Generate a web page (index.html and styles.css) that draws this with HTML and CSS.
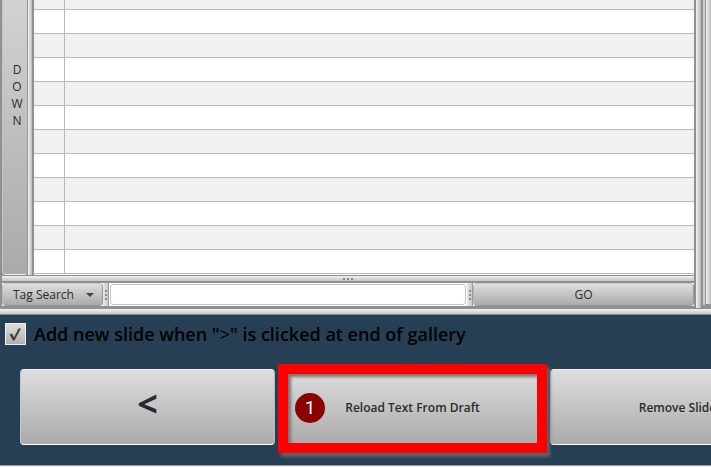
FILE: index.html
```
<!DOCTYPE html>
<html lang="en">
<head>
<meta charset="utf-8">
<title>Slide editor</title>
<link rel="stylesheet" href="styles.css">
</head>
<body>
<main class="workspace">
  <section class="editor">
    <div class="gallery">
      <button class="btn down" type="button"><span>D</span><span>O</span><span>W</span><span>N</span></button>
      <div class="bar-v"></div>
      <div class="sheet">
        <table aria-label="Slides">
          <tbody>
            <tr class="first"><td class="num"></td><td></td></tr>
            <tr><td></td><td></td></tr>
            <tr><td></td><td></td></tr>
            <tr><td></td><td></td></tr>
            <tr><td></td><td></td></tr>
            <tr><td></td><td></td></tr>
            <tr><td></td><td></td></tr>
            <tr><td></td><td></td></tr>
            <tr><td></td><td></td></tr>
            <tr><td></td><td></td></tr>
            <tr><td></td><td></td></tr>
            <tr><td></td><td></td></tr>
          </tbody>
        </table>
      </div>
    </div>
    <div class="bar-h"><i></i><i></i><i></i></div>
    <form class="search">
      <button class="btn tag" type="button">Tag Search
        <svg width="8" height="4" viewBox="0 0 8 4" aria-hidden="true"><path d="M0 0h8L4 4z" fill="#444"/></svg>
      </button>
      <div class="grip"><i></i><i></i><i></i></div>
      <input class="query" type="text" aria-label="Tag">
      <div class="grip"><i></i><i></i><i></i></div>
      <button class="btn go" type="button">GO</button>
    </form>
  </section>
  <div class="divider"></div>
  <aside class="next-pane"><div></div></aside>
</main>
<div class="shelf"></div>
<footer class="controls">
  <label class="option"><input type="checkbox" checked><svg class="tick" width="20" height="20" viewBox="0 0 20 20" aria-hidden="true"><path d="M4.5 10.5L7 9.5L9 13.2L13.5 4.5L16 4.5L9.5 16.5H7.8z" fill="#444"/></svg><span>Add new slide when "<span class="sign">&gt;</span>" is clicked at end of gallery</span></label>
  <div class="actions">
    <button class="btn action prev" type="button">&lt;</button>
    <div class="marked">
      <button class="btn action" type="button">Reload Text From Draft</button>
      <div class="frame"><span class="step">1</span></div>
    </div>
    <button class="btn action" type="button">Remove Slide</button>
  </div>
</footer>
</body>
</html>
```

FILE: styles.css
```
* { box-sizing: border-box; }
body {
  margin: 0;
  height: 100vh;
  overflow: hidden;
  display: flex;
  flex-direction: column;
  background: #f2f2f2;
  font: 12px "Open Sans", "Noto Sans", sans-serif;
  color: #2b2b2b;
}
.btn {
  margin: 0;
  padding: 0;
  font: inherit;
  color: inherit;
  border: 1px solid #b8b8b8;
  background: linear-gradient(#dedede, #aaa);
  border-radius: 4px;
}
.workspace { flex: 1; min-height: 0; display: flex; background: #909090; }
.editor {
  flex: 1;
  min-width: 0;
  display: flex;
  flex-direction: column;
  padding: 0 0 3px 2px;
}
.gallery { flex: 1; min-height: 0; display: flex; }
.down {
  width: 26px;
  display: flex;
  flex-direction: column;
  align-items: center;
  padding-top: 61px;
  padding-left: 4px;
  line-height: 17px;
  border-width: 0 1px 1px;
  border-color: #c4c4c4 #969696 #eee #c4c4c4;
  border-radius: 0 0 4px 4px;
  background: linear-gradient(#d2d2d2, #aaa);
}
.bar-v { width: 4px; background: linear-gradient(90deg, #f4f4f4, #bcbcbc); }
.sheet {
  flex: 1;
  overflow: hidden;
  margin-left: 2px;
  background: #fff;
}
table { width: 100%; border-collapse: separate; border-spacing: 0; table-layout: fixed; }
td { height: 24px; padding: 0; border-bottom: 1px solid #b9b9b9; }
.first td { height: 10px; }
.num { width: 31px; }
td:first-child { border-right: 1px solid #b9b9b9; }
tr:nth-child(odd) { background: #f1f1f1; }
.bar-h {
  height: 8px;
  display: flex;
  justify-content: center;
  align-items: center;
  gap: 2px;
  border-top: 1px solid #909090;
  border-bottom: 2px solid #909090;
  background: linear-gradient(#f0f0f0, #c4c4c4);
}
.bar-h i, .grip i { width: 2px; height: 2px; background: #888; }
.search { display: flex; height: 23px; background: #fff; }
.tag {
  width: 101px;
  padding: 0 8px 0 10px;
  display: flex;
  align-items: center;
  justify-content: space-between;
}
.search .btn { border: 1px solid #a2a2a2; border-color: #c8c8c8 #999 #999 #bbb; }
.grip {
  width: 6px;
  display: flex;
  flex-direction: column;
  align-items: center;
  justify-content: center;
  gap: 2px;
  background: linear-gradient(90deg, #e8e8e8, #c8c8c8);
  border-right: 1px solid #999;
}
.query {
  flex: 1;
  min-width: 0;
  margin: 1px;
  padding: 0 6px;
  border: 1px solid #c4c4c4;
  border-radius: 3px;
  background: #fff;
  font: inherit;
}
.go { flex: 0 1 221px; }
.divider {
  width: 9px;
  margin-bottom: 1px;
  border: 2px solid #909090;
  border-width: 0 2px;
  background: linear-gradient(90deg, #f2f2f2, #b8b8b8);
}
.next-pane {
  width: 8px;
  padding: 0 0 1px 2px;
  background: linear-gradient(90deg, #d0d0d0 2px, #909090 2px);
  border-bottom: 4px solid #909090;
}
.next-pane div {
  height: 100%;
  border-left: 1px solid #909090;
  background: linear-gradient(90deg, #f2f2f2, #b8b8b8);
}
.shelf { height: 6px; background: linear-gradient(#f4f4f4, #c4c4c4 5px, #8b8b8b 5px); }
.controls {
  height: 151px;
  border-bottom: 1px solid #9a9a9a;
  background: #263f55;
  margin-bottom: 1px;
  padding: 6px 0 0 5px;
}
.option {
  position: relative;
  display: flex;
  align-items: center;
  gap: 8px;
  height: 26px;
  font-size: 18px;
  font-weight: 600;
  line-height: 26px;
  color: #000;
}
.option input {
  appearance: none;
  width: 21px;
  height: 22px;
  margin: 0;
  border: 1px solid #eee;
  background: linear-gradient(#dedede, #b0b0b0);
}
.tick { position: absolute; left: 0; top: 3px; pointer-events: none; }
.sign { font-weight: 400; }
.actions { display: flex; gap: 10px; margin: 22px 0 0 15px; }
.action {
  flex: none;
  width: 255px;
  height: 76px;
  font-size: 12px;
  font-weight: 600;
  border-color: #f0f0f0 #b8b8b8 #fff #c8c8c8;
}
.prev { font-size: 36px; font-weight: 700; line-height: 36px; padding-bottom: 6px; }
.marked { position: relative; flex: none; }
.marked .action { border-color: #aaa; }
.frame {
  position: absolute;
  inset: -5px -7px -8px;
  padding: 19px 7px;
  border: 10px solid #f00;
  box-shadow: 3px 4px 3px #5d646a, inset 3px 3px 3px #777;
  pointer-events: none;
}
.step {
  display: block;
  width: 30px;
  height: 30px;
  border-radius: 50%;
  background: #8b0000;
  color: #fff;
  font: 18px/30px Roboto, sans-serif;
  text-align: center;
}
```
